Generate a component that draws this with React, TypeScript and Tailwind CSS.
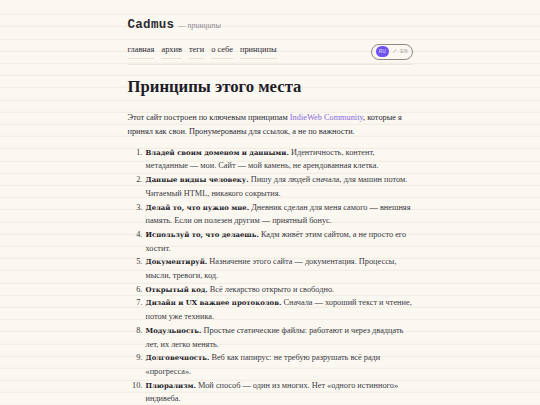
import React from "react";

const items: [string, string][] = [
  ["Владей своим доменом и данными.", "Идентичность, контент, метаданные — мои. Сайт — мой камень, не арендованная клетка."],
  ["Данные видны человеку.", "Пишу для людей сначала, для машин потом. Читаемый HTML, никакого сокрытия."],
  ["Делай то, что нужно мне.", "Дневник сделан для меня самого — внешняя память. Если он полезен другим — приятный бонус."],
  ["Используй то, что делаешь.", "Кадм живёт этим сайтом, а не просто его хостит."],
  ["Документируй.", "Назначение этого сайта — документация. Процессы, мысли, тревоги, код."],
  ["Открытый код.", "Всё лекарство открыто и свободно."],
  ["Дизайн и UX важнее протоколов.", "Сначала — хороший текст и чтение, потом уже техника."],
  ["Модульность.", "Простые статические файлы: работают и через двадцать лет, их легко менять."],
  ["Долговечность.", "Веб как папирус: не требую разрушать всё ради «прогресса»."],
  ["Плюрализм.", "Мой способ — один из многих. Нет «одного истинного» индивеба."],
  ["Получай удовольствие.", "Делай веб странным и интересным."],
];

export default function App() {
  return (
    <div
      className="min-h-[405px] w-full bg-[#fbf8f1] text-[#2b2a33]"
      style={{
        backgroundImage:
          "repeating-linear-gradient(to bottom, transparent 0px, transparent 11.2px, #f0ebe1 11.2px, #f0ebe1 12.2px)",
        backgroundPosition: "0 2.8px",
        fontFamily: '"Liberation Serif", serif',
      }}
    >
      <div className="mx-auto w-[285px] pt-[16px]">
        <div className="flex items-baseline gap-[4px]">
          <span
            className="text-[12.5px] font-bold tracking-[0.3px] text-[#2b2a33]"
            style={{ fontFamily: '"Liberation Mono", monospace' }}
          >
            Cadmus
          </span>
          <span className="text-[8px] italic text-[#8a8690]">— принципы</span>
        </div>
        <div className="mt-[9px] flex items-center justify-between border-b border-[#ece6dc] pb-[4px]">
          <nav className="flex gap-[7px] text-[8.4px] text-[#2b2a33]">
            {["главная", "архив", "теги", "о себе", "принципы"].map((n) => (
              <span key={n} className="border-b border-[#e8e0d4] pb-[1px]">
                {n}
              </span>
            ))}
          </nav>
          <div
            className="flex h-[16px] w-[42px] items-center whitespace-nowrap rounded-full border border-[#8d8985] px-[4px] text-[6px]"
            style={{ fontFamily: '"Liberation Mono", monospace' }}
          >
            <span className="flex h-[11px] w-[14px] items-center justify-center rounded-full bg-[#6f52f0] text-[#d8cffc]">
              RU
            </span>
            <span className="ml-[4px] text-[#aaa6a2]">/ EN</span>
          </div>
        </div>
        <h1 className="mt-[11px] text-[16.7px] font-bold leading-[22px] text-[#1e1c29]">
          Принципы этого места
        </h1>
        <p className="mt-[13px] text-[8.3px] leading-[14px] text-[#2b2a33]">
          Этот сайт построен по ключевым принципам{" "}
          <span className="text-[#8766e0]">IndieWeb Community</span>, которые я принял как свои.
          Пронумерованы для ссылок, а не по важности.
        </p>
        <ol className="mt-[7px] list-decimal pl-[17px] text-[8.3px] leading-[13.7px] text-[#3a3842]">
          {items.map(([b, t], i) => (
            <li key={i} className="pl-[1px]">
              <b
                className="text-[6.9px] font-bold leading-none text-[#1e1c29]"
                style={{ fontFamily: '"DejaVu Serif", serif' }}
              >
                {b}
              </b>{" "}
              {t}
            </li>
          ))}
        </ol>
      </div>
    </div>
  );
}
